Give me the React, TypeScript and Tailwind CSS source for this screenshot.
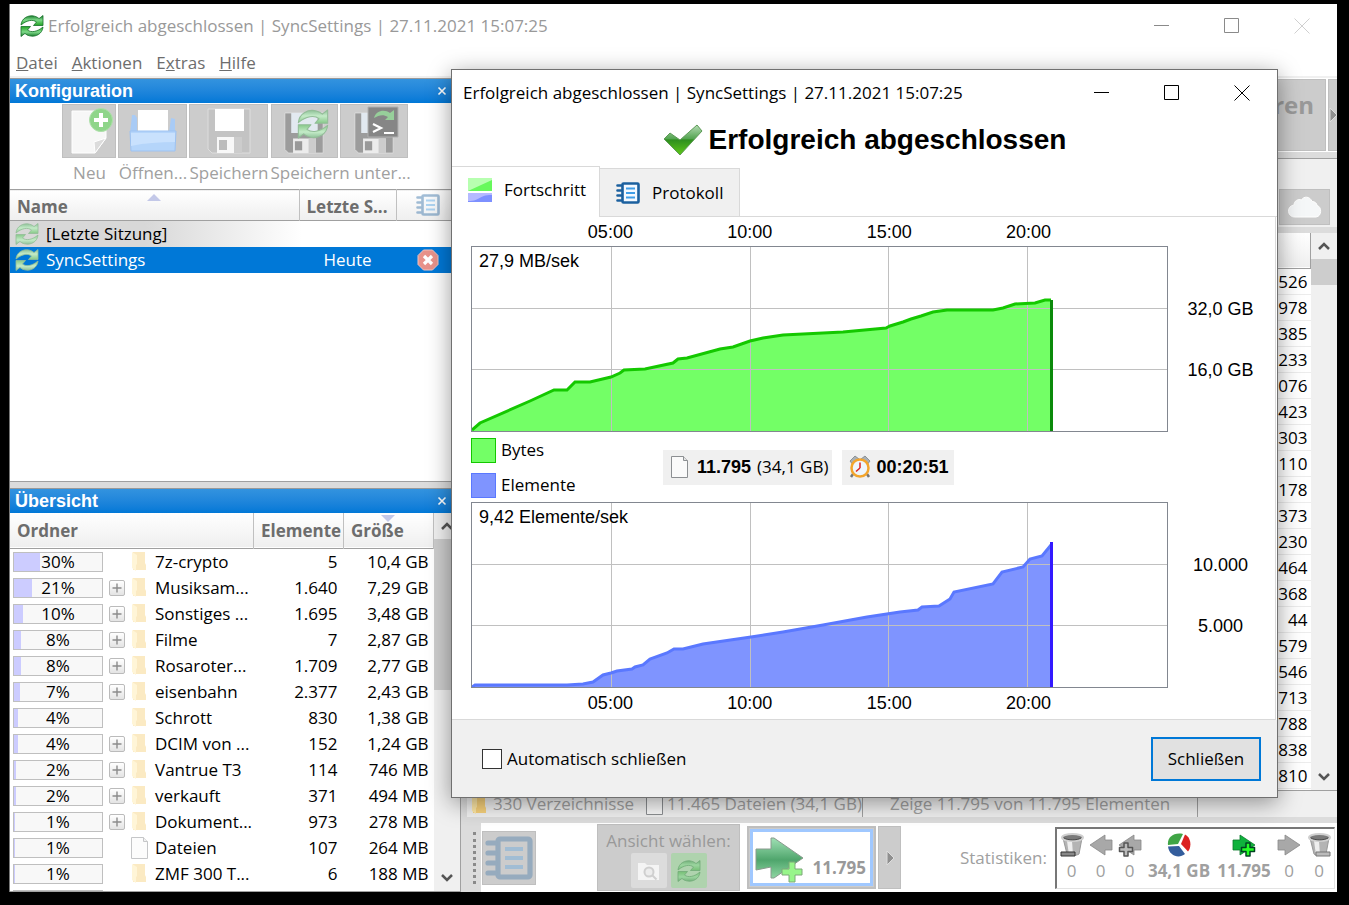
import type { ReactNode } from "react";

const folders = [
  { pct: 30, open: false, name: "7z-crypto", items: "5", size: "10,4 GB" },
  { pct: 21, open: true, name: "Musiksam...", items: "1.640", size: "7,29 GB" },
  { pct: 10, open: true, name: "Sonstiges ...", items: "1.695", size: "3,48 GB" },
  { pct: 8, open: true, name: "Filme", items: "7", size: "2,87 GB" },
  { pct: 8, open: true, name: "Rosaroter...", items: "1.709", size: "2,77 GB" },
  { pct: 7, open: true, name: "eisenbahn", items: "2.377", size: "2,43 GB" },
  { pct: 4, open: false, name: "Schrott", items: "830", size: "1,38 GB" },
  { pct: 4, open: true, name: "DCIM von ...", items: "152", size: "1,24 GB" },
  { pct: 2, open: true, name: "Vantrue T3", items: "114", size: "746 MB" },
  { pct: 2, open: true, name: "verkauft", items: "371", size: "494 MB" },
  { pct: 1, open: true, name: "Dokument...", items: "973", size: "278 MB" },
  { pct: 1, open: false, name: "Dateien", items: "107", size: "264 MB", file: true },
  { pct: 1, open: false, name: "ZMF 300 T...", items: "6", size: "188 MB" },
];

const sizes = [
  "526", "978", "385", "233", "076", "423", "303", "110", "178", "373",
  "230", "464", "368", "44", "579", "546", "713", "788", "838", "810",
];

const times = ["05:00", "10:00", "15:00", "20:00"];

const bytesLine =
  "1,184 9,177 59,155 83,144 96,144 104,136 119,136 140,131 149,127 153,124 174,123 202,117 207,113 216,112 249,103 262,101 279,95 292,92 312,89 372,86 415,82 419,80 432,76 440,73 450,70 462,66 476,64 522,64 532,62 544,58 564,57 574,54 580,54";
const itemsLine =
  "1,185 4,183 96,183 112,182 122,180 132,173 140,171 146,169 161,167 164,165 172,163 179,157 196,151 203,147 212,147 232,142 280,135 312,130 352,123 396,115 429,110 447,108 451,105 468,104 479,97 483,90 522,82 531,70 552,65 559,57 571,54 580,43";

export default function App() {
  return (
    <div className="relative h-screen min-h-[905px] min-w-[1200px] overflow-hidden bg-black pt-1 pr-3 pb-[13px] pl-[9px] font-['Open_Sans','Noto_Sans',sans-serif] text-[17px] leading-[26px] text-black">
      <div className="flex h-full flex-col border-l border-[#777] bg-white">
        <header className="flex h-[44px] shrink-0 items-center pl-2.5">
          <SyncIcon className="h-6 w-6" />
          <h1 className="ml-1 flex-1 text-[#999]">Erfolgreich abgeschlossen | SyncSettings | 27.11.2021 15:07:25</h1>
          <WindowButtons className="mr-[27px] text-[#8a8a8a]" closeClass="text-[#d0d0d0]" />
        </header>
        <nav className="flex h-[30px] shrink-0 gap-3.5 border-b-2 border-[#f0f0f0] pt-0.5 pl-1.5 text-[#6d6d6d]">
          <a href="#datei"><u>D</u>atei</a>
          <a href="#aktionen"><u>A</u>ktionen</a>
          <a href="#extras">E<u>x</u>tras</a>
          <a href="#hilfe"><u>H</u>ilfe</a>
        </nav>
        <div className="flex min-h-0 flex-1">
          <aside className="flex w-[451px] shrink-0 flex-col border-r border-[#a0a0a0]">
            <ConfigPanel />
            <div className="h-[7px] shrink-0 border-y border-t-[#a0a0a0] border-b-[#dcdcdc] bg-[#dcdcdc]" />
            <OverviewPanel />
          </aside>
          <MainPanel />
        </div>
      </div>
      <ProgressDialog />
    </div>
  );
}

function PanelTitle({ children }: { children: ReactNode }) {
  return (
    <div className="flex h-[25px] shrink-0 items-center justify-between border-t border-[#999] bg-linear-to-b from-[#3393df] to-[#0078d7] pr-[13px] pl-[5px] font-['Liberation_Sans',Arial,sans-serif] text-[18px] font-bold text-white">
      <h2>{children}</h2>
      <button aria-label="Schließen">
        <svg className="h-2.5 w-2.5" viewBox="0 0 10 10" stroke="currentColor" strokeWidth="1.6">
          <path d="M1.5 1.5l7 7M8.5 1.5l-7 7" />
        </svg>
      </button>
    </div>
  );
}

function ToolButton({ className, label, children }: { className: string; label: string; children: ReactNode }) {
  return (
    <button aria-label={label} className={`flex h-[54px] items-center justify-center border border-[#bfbfbf] bg-[#ccc] ${className}`}>
      {children}
    </button>
  );
}

function ConfigPanel() {
  return (
    <section className="flex h-[403px] shrink-0 flex-col">
      <PanelTitle>Konfiguration</PanelTitle>
      <div className="flex h-[86px] shrink-0 justify-center gap-0.5 pt-px text-[#a0a0a0]">
        <div className="text-center">
          <ToolButton label="Neu" className="w-[54px]"><NewIcon /></ToolButton>
          <div className="mt-0.5">Neu</div>
        </div>
        <div className="text-center">
          <ToolButton label="Öffnen" className="w-[69px]"><OpenIcon /></ToolButton>
          <div className="mt-0.5">Öffnen...</div>
        </div>
        <div className="text-center">
          <ToolButton label="Speichern" className="w-[79px]"><FloppyIcon light /></ToolButton>
          <div className="mt-0.5">Speichern</div>
        </div>
        <div className="w-[137px] text-center whitespace-nowrap">
          <div className="flex gap-0.5">
            <ToolButton label="Speichern unter" className="w-[67px]">
              <div className="relative">
                <FloppyIcon />
                <SyncIcon pale className="absolute top-0 left-3.5 h-8 w-8" />
              </div>
            </ToolButton>
            <ToolButton label="Als Batchauftrag speichern" className="w-[68px]">
              <div className="relative">
                <FloppyIcon />
                <BatchIcon />
              </div>
            </ToolButton>
          </div>
          <div className="mt-0.5">Speichern unter...</div>
        </div>
      </div>
      <table className="w-full table-fixed">
        <colgroup>
          <col />
          <col className="w-[97px]" />
          <col className="w-[64px]" />
        </colgroup>
        <thead>
          <tr className="h-[29px] border-y border-[#a0a0a0] bg-linear-to-b from-white to-[#efefef] text-left font-bold text-[#6d6d6d]">
            <th className="relative border-r border-[#c0c0c0] pt-1 pl-[7px]">
              Name
              <SortArrow className="absolute top-1 left-[137px]" />
            </th>
            <th className="border-r border-[#c0c0c0] pt-1 pl-[7px]">Letzte S...</th>
            <th>
              <NotebookIcon className="mx-auto h-6 w-6 opacity-40" />
            </th>
          </tr>
        </thead>
        <tbody>
          <tr className="h-[26px] bg-linear-to-r from-[#d8d8d8] from-30% to-white to-65%">
            <td>
              <div className="flex items-center gap-[7px] pl-[5px]">
                <SyncIcon pale className="h-6 w-6" />
                [Letzte Sitzung]
              </div>
            </td>
            <td />
            <td />
          </tr>
          <tr className="h-[26px] bg-[#0078d7] text-white">
            <td>
              <div className="flex items-center gap-[7px] pl-[5px]">
                <SyncIcon pale className="h-6 w-6" />
                SyncSettings
              </div>
            </td>
            <td className="text-center">Heute</td>
            <td>
              <svg className="mx-auto h-[22px] w-[22px]" viewBox="0 0 22 22">
                <path d="M6.5 1h9L21 6.500v9L15.500 21h-9L1 15.500v-9z" fill="#e8928a" stroke="#f0c4c0" />
                <path d="M7 7l8 8M15 7l-8 8" stroke="#fff" strokeWidth="3.200" />
              </svg>
            </td>
          </tr>
        </tbody>
      </table>
    </section>
  );
}

function OverviewPanel() {
  return (
    <section className="flex min-h-0 flex-1 flex-col">
      <PanelTitle>Übersicht</PanelTitle>
      <div className="flex min-h-0 flex-1 border-b border-[#a0a0a0]">
        <div className="min-w-0 flex-1 overflow-hidden">
          <table className="w-full table-fixed">
            <colgroup>
              <col />
              <col className="w-[90px]" />
              <col className="w-[90px]" />
            </colgroup>
            <thead>
              <tr className="h-[35px] border-b border-[#a0a0a0] bg-linear-to-b from-white to-[#efefef] text-left font-bold text-[#6d6d6d]">
                <th className="border-r border-[#c0c0c0] pt-0.5 pl-[7px]">Ordner</th>
                <th className="border-r border-[#c0c0c0] pt-0.5 pl-[7px]">Elemente</th>
                <th className="relative border-r border-[#c0c0c0] pt-0.5 pl-[7px]">
                  Größe
                  <SortArrow className="absolute top-0.5 left-[37px] rotate-180" />
                </th>
              </tr>
            </thead>
            <tbody>
              {folders.map((f) => (
                <tr key={f.name} className="h-[26px]">
                  <td>
                    <div className="flex items-center pl-[3px]">
                      <Percent value={f.pct} label={`${f.pct}%`} />
                      <div className="ml-1.5 w-4">
                        {f.open && (
                          <button aria-label="Aufklappen" className="block h-4 w-4 rounded-xs border border-[#bbb] bg-linear-to-b from-white to-[#e4e4e4]">
                            <svg viewBox="0 0 14 14" stroke="#8c8c8c" strokeWidth="1.400">
                              <path d="M7 2.500v9M2.500 7h9" />
                            </svg>
                          </button>
                        )}
                      </div>
                      <div className="ml-1.5 w-6">{f.file ? <FileIcon className="h-[22px] w-[17px] opacity-50" /> : <FolderIcon className="h-[21px] w-4 opacity-45" />}</div>
                      <span className="whitespace-nowrap">{f.name}</span>
                    </div>
                  </td>
                  <td className="pr-1.5 text-right">{f.items}</td>
                  <td className="pr-[5px] text-right whitespace-nowrap">{f.size}</td>
                </tr>
              ))}
              <tr className="h-[26px]">
                <td className="pl-[3px]">
                  <Percent value={1} label="" />
                </td>
                <td />
                <td />
              </tr>
            </tbody>
          </table>
        </div>
        <ScrollBar thumb="h-[151px]" />
      </div>
    </section>
  );
}

function Percent({ value, label }: { value: number; label: string }) {
  return (
    <div className="relative h-5 w-[90px] border border-[#bfbfbf] bg-[#f8f8f8]">
      <div className="h-full bg-[#ccccff]" style={{ width: `${value}%` }} />
      <span className="absolute inset-0 text-center leading-[18px]">{label}</span>
    </div>
  );
}

function ScrollBar({ thumb }: { thumb: string }) {
  return (
    <div className="flex w-[26px] shrink-0 flex-col items-center bg-[#f0f0f0] text-[#555]">
      <svg className="my-2 h-2.5 w-3 shrink-0" viewBox="0 0 12 10" fill="none" stroke="currentColor" strokeWidth="2.500">
        <path d="M1 8l5-5 5 5" />
      </svg>
      <div className={`w-full bg-[#cdcdcd] ${thumb}`} />
      <svg className="mt-auto mb-2 h-2.5 w-3 shrink-0" viewBox="0 0 12 10" fill="none" stroke="currentColor" strokeWidth="2.500">
        <path d="M1 2l5 5 5-5" />
      </svg>
    </div>
  );
}

function MainPanel() {
  return (
    <main className="flex min-w-0 flex-1 flex-col border-l-[6px] border-[#dcdcdc] bg-[#f0f0f0]">
      <div className="flex h-[74px] shrink-0 justify-end gap-0.5 bg-white pt-px">
        <button className="h-[72px] w-[220px] border border-[#bfbfbf] bg-[#ccc] pr-[11px] pb-5 text-right text-[24px] font-bold text-[#999]">Synchronisieren</button>
        <button aria-label="Mehr" className="flex h-[72px] w-[9px] items-center border border-r-0 border-[#bfbfbf] bg-[#ccc]">
          <Triangle />
        </button>
      </div>
      <div className="h-[7px] shrink-0 border-b border-[#a0a0a0] bg-[#dcdcdc]" />
      <div className="flex h-[68px] shrink-0 items-end justify-end pr-[7px] pb-0.5">
        <button aria-label="Cloud" className="flex h-[36px] w-[51px] items-center justify-center border border-[#bfbfbf] bg-[#ccc]">
          <svg className="h-[22px] w-[34px]" viewBox="0 0 34 22">
            <path d="M7 21a6 6 0 0 1-1-12c0-4 4-6.500 7.500-5C15.500 0 22 0 24 5.500c3 0 5 2 5 4 5 1 5 11-1 11.500z" fill="#f5f7f8" stroke="#fff" />
          </svg>
        </button>
      </div>
      <div className="h-1.5 shrink-0 bg-[#dcdcdc]" />
      <div className="flex min-h-0 flex-1 border-b border-[#a0a0a0] bg-white">
        <div className="min-w-0 flex-1 overflow-hidden">
          <table className="w-full">
            <thead>
              <tr className="h-[35px] border-b border-[#a0a0a0] bg-linear-to-b from-white to-[#efefef]">
                <th className="border-r border-[#a0a0a0]" />
              </tr>
            </thead>
            <tbody>
              {sizes.map((s) => (
                <tr key={s} className="h-[25px] border-b border-[#ececec] leading-[25px]">
                  <td className="pr-[3px] text-right">{s}</td>
                </tr>
              ))}
            </tbody>
          </table>
        </div>
        <ScrollBar thumb="h-[26px]" />
      </div>
      <div className="flex h-[26px] shrink-0 items-center text-[#a0a0a0]">
        <FolderIcon className="ml-1 h-[21px] w-4" />
        <span className="ml-1.5 whitespace-nowrap">330 Verzeichnisse</span>
        <FileIcon className="mr-1 ml-3 h-[22px] w-[17px]" />
        <span className="border-r border-[#a0a0a0] whitespace-nowrap">11.465 Dateien (34,1 GB)</span>
        <span className="border-r border-[#a0a0a0] px-[27px] whitespace-nowrap">Zeige 11.795 von 11.795 Elementen</span>
      </div>
      <div className="h-1.5 shrink-0 bg-[#dcdcdc]" />
      <footer className="flex h-[69px] shrink-0 items-center bg-white text-[#999]">
        <div className="flex h-full w-3.5 items-center justify-center bg-[#dcdcdc]">
          <div className="h-[52px] border-l-[3px] border-dotted border-[#8a8a8a]" />
        </div>
        <ToolButton label="Protokoll" className="ml-px w-[54px]">
          <NotebookIcon inner="none" className="h-[48px] w-[48px] opacity-30" />
        </ToolButton>
        <div className="ml-[61px] flex h-[67px] w-[143px] flex-col items-center border border-[#bfbfbf] bg-[#ccc] pt-1">
          <span className="leading-6">Ansicht wählen:</span>
          <div className="flex gap-1">
            <button aria-label="Aktion" className="flex h-[35px] w-[36px] items-center justify-center rounded-xs bg-[#dcdcdc]">
              <svg className="h-6 w-6" viewBox="0 0 24 24">
                <path d="M1 4h7l2 2h12v15H1z" fill="#f4f4f4" />
                <circle cx="12" cy="13" r="4.500" fill="#ececec" stroke="#cfcfcf" strokeWidth="2" />
                <path d="M15.500 16.500l4 4" stroke="#cfcfcf" strokeWidth="2" />
              </svg>
            </button>
            <button aria-label="Kategorie" className="flex h-[35px] w-[36px] items-center justify-center rounded-xs bg-[#afd3ae]">
              <SyncIcon className="h-6 w-6 opacity-40" />
            </button>
          </div>
        </div>
        <button className="ml-[7px] h-[63px] w-[129px] border-2 border-[#bfbfbf] bg-[#ccc] p-px">
          <div className="flex h-full items-end border-[3px] border-[#a0c8ff] bg-white">
            <svg className="ml-0.5 h-[48px] w-[50px]" viewBox="0 0 50 48">
              <defs>
                <linearGradient id="go" x1="0" y1="0" x2="0" y2="1">
                  <stop offset="0" stopColor="#9fe0b4" />
                  <stop offset="0.550" stopColor="#4fa56c" />
                  <stop offset="1" stopColor="#8ed6a2" />
                </linearGradient>
              </defs>
              <path d="M1 14h15V3h3l29 20-29 20h-3V32l-15 3z" fill="url(#go)" stroke="#8a9a8e" />
              <path d="M34 27h6v7h7v6h-7v7h-6v-7h-7v-6h7z" fill="#97f58a" stroke="#7da879" />
            </svg>
            <span className="ml-auto pr-1 pb-0.5 font-bold">11.795</span>
          </div>
        </button>
        <button aria-label="Optionen" className="ml-0.5 flex h-[63px] w-[23px] items-center justify-center border border-[#bfbfbf] bg-[#ccc]">
          <Triangle />
        </button>
        <span className="ml-auto pr-2 text-[#a0a0a0]">Statistiken:</span>
        <div className="mr-0.5 flex h-[62px] shrink-0 border-t-2 border-r border-b border-l-2 border-t-[#777] border-r-[#e3e3e3] border-b-[#e3e3e3] border-l-[#777] pt-1 text-center text-[#a0a0a0]">
          <Stat className="w-[29px]" value="0"><BinIcon /></Stat>
          <Stat className="w-[29px]" value="0"><ArrowIcon left /></Stat>
          <Stat className="w-[29px]" value="0"><ArrowIcon left plus /></Stat>
          <Stat className="w-[70px] font-bold" value="34,1 GB">
            <svg className="h-6 w-6" viewBox="0 0 24 24">
              <path d="M11 11L1 12C0 5 6-1 16 1z" fill="#3fa545" />
              <path d="M14 11l4-9.500c6 3 7 12 3 17z" fill="#dc2020" />
              <path d="M12 13l6 8C12 26 2 23 1 13.500z" fill="#345d9c" />
            </svg>
          </Stat>
          <Stat className="w-[60px] font-bold" value="11.795"><ArrowIcon green plus /></Stat>
          <Stat className="w-[30px]" value="0"><ArrowIcon /></Stat>
          <Stat className="w-[30px]" value="0"><BinIcon right /></Stat>
        </div>
      </footer>
    </main>
  );
}

function Stat({ className, value, children }: { className: string; value: string; children: ReactNode }) {
  return (
    <div className={`flex flex-col items-center gap-px whitespace-nowrap ${className}`}>
      {children}
      <span>{value}</span>
    </div>
  );
}

function ProgressDialog() {
  return (
    <div role="dialog" aria-label="Fortschritt" className="absolute top-[69px] right-[71px] left-[451px] border border-[#707070] bg-white shadow-[0_5px_22px_rgba(0,0,0,0.400)]">
      <div className="flex h-[45px] items-center pl-[11px]">
        <h2 className="flex-1">Erfolgreich abgeschlossen | SyncSettings | 27.11.2021 15:07:25</h2>
        <WindowButtons className="mr-[27px] text-black" />
      </div>
      <div className="flex h-[51px] items-center justify-center gap-1.5 pb-0.5 font-['Liberation_Sans',Arial,sans-serif] text-[28px] font-bold">
        <svg className="h-8 w-10" viewBox="0 0 40 32">
          <defs>
            <linearGradient id="ok" x1="0" y1="0" x2="0" y2="1">
              <stop offset="0" stopColor="#b5dcb5" />
              <stop offset="0.450" stopColor="#55a552" />
              <stop offset="0.500" stopColor="#2f8f1f" />
              <stop offset="1" stopColor="#5fc818" />
            </linearGradient>
          </defs>
          <path d="M1 15l6-6 10 7L34 1l5 6-22 24z" fill="url(#ok)" stroke="#5d9a56" strokeLinejoin="round" />
        </svg>
        Erfolgreich abgeschlossen
      </div>
      <div role="tablist" className="flex items-end">
        <button role="tab" aria-selected="true" className="flex h-[51px] w-[148px] items-center gap-3 border-t border-r border-[#d9d9d9] pb-1 pl-4">
          <svg className="h-6 w-6" viewBox="0 0 24 24">
            <path d="M0 0h24v13H0z" fill="#b7ffb0" />
            <path d="M0 13L24 2v11z" fill="#67f95c" />
            <path d="M0 15h24v9H0z" fill="#b5baff" />
            <path d="M0 23c14 0 9-6 24-6v7H0z" fill="#7d90ff" />
          </svg>
          Fortschritt
        </button>
        <button role="tab" aria-selected="false" className="flex h-[49px] w-[140px] items-center gap-3 border border-l-0 border-[#d9d9d9] bg-[#f0f0f0] pl-4">
          <NotebookIcon className="h-6 w-6" />
          Protokoll
        </button>
        <div className="flex-1 border-b border-[#d9d9d9]" />
      </div>
      <div className="mr-px border-r border-b border-[#d9d9d9] pl-[19px] font-['Liberation_Sans',Arial,sans-serif] text-[18px]">
        <div className="mr-[107px] flex h-[29px] items-center">
          <TimeLabels />
        </div>
        <Chart speed="27,9 MB/sek" labels={["32,0 GB", "16,0 GB"]} line={bytesLine} fill="#73ff66" stroke="#14c800" end="#0b8a0b" top={54} />
        <div className="flex h-[70px] font-['Open_Sans','Noto_Sans',sans-serif] text-[17px]">
          <div className="w-[192px] space-y-[9px] pt-[5px]">
            <div className="flex items-center gap-[5px]">
              <span className="h-[25px] w-[25px] border border-[#14c800] bg-[#73ff66]" />
              Bytes
            </div>
            <div className="flex items-center gap-[5px]">
              <span className="h-[25px] w-[25px] border border-[#5a78ff] bg-[#7f94ff]" />
              Elemente
            </div>
          </div>
          <div className="flex items-center gap-2.5 whitespace-nowrap">
            <div className="flex h-[35px] items-center bg-[#f0f0f0] pr-1 pl-2">
              <FileIcon className="h-[22px] w-[17px]" />
              <b className="mr-1.5 ml-[9px] font-['Liberation_Sans',Arial,sans-serif] text-[18px]">11.795</b>
              (34,1 GB)
            </div>
            <div className="flex h-[35px] items-center gap-1 bg-[#f0f0f0] px-1.5">
              <ClockIcon />
              <b className="font-['Liberation_Sans',Arial,sans-serif] text-[18px]">00:20:51</b>
            </div>
          </div>
        </div>
        <Chart speed="9,42 Elemente/sek" labels={["10.000", "5.000"]} line={itemsLine} fill="#7f94ff" stroke="#5a78ff" end="#3319ff" top={40} />
        <div className="mr-[107px] flex h-[31px] items-center pb-0.5">
          <TimeLabels />
        </div>
      </div>
      <div className="flex h-[77px] items-center justify-between bg-[#f0f0f0] pr-4 pl-[30px]">
        <label className="flex items-center gap-[5px]">
          <input type="checkbox" className="h-5 w-5 appearance-none border border-[#333] bg-white" />
          Automatisch schließen
        </label>
        <button className="h-[44px] w-[110px] border-2 border-[#0078d7] bg-[#e1e1e1]">Schließen</button>
      </div>
    </div>
  );
}

function TimeLabels() {
  return (
    <>
      <span className="w-[10%]" />
      {times.map((t) => (
        <span key={t} className="w-1/5 text-center">{t}</span>
      ))}
    </>
  );
}

function Chart({ speed, labels, line, fill, stroke, end, top }: {
  speed: string;
  labels: string[];
  line: string;
  fill: string;
  stroke: string;
  end: string;
  top: number;
}) {
  return (
    <div className="flex h-[186px]">
      <div className="relative flex-1 border border-[#828790]">
        <svg className="block h-full w-full" viewBox="1 1 695 184" preserveAspectRatio="none" fill="none">
          <polygon points={`1,186 ${line} 580,186`} fill={fill} />
          <path d="M140.500 0v186M279.500 0v186M417.500 0v186M556.500 0v186M0 62.500h697M0 123.500h697" stroke="#c0c0c0" />
          <polyline points={line} stroke={stroke} strokeWidth="3" />
          <path d={`M580.500 ${top}V186`} stroke={end} strokeWidth="3" />
        </svg>
        <span className="absolute top-px left-[7px]">{speed}</span>
      </div>
      <div className="flex w-[107px] flex-col items-center gap-[35px] pt-[50px] pr-0.5">
        {labels.map((l) => (
          <span key={l}>{l}</span>
        ))}
      </div>
    </div>
  );
}

function WindowButtons({ className, closeClass = "" }: { className: string; closeClass?: string }) {
  return (
    <div className={`flex items-center gap-[54px] ${className}`}>
      <button aria-label="Minimieren">
        <svg className="h-4 w-4" viewBox="0 0 16 16" stroke="currentColor"><path d="M0 7.500h15" /></svg>
      </button>
      <button aria-label="Maximieren">
        <svg className="h-4 w-4" viewBox="0 0 16 16" fill="none" stroke="currentColor"><path d="M.5.5h14v14H.5z" /></svg>
      </button>
      <button aria-label="Schließen" className={closeClass}>
        <svg className="h-4 w-4" viewBox="0 0 16 16" stroke="currentColor"><path d="M.5.500l15 15M15.500.5l-15 15" /></svg>
      </button>
    </div>
  );
}

function Triangle() {
  return (
    <svg className="h-4 w-2 shrink-0" viewBox="0 0 8 16">
      <path d="M1 1l7 7-7 7z" fill="#8f8f8f" stroke="#ddd" />
    </svg>
  );
}

function SortArrow({ className }: { className: string }) {
  return (
    <svg className={`h-[7px] w-3.5 ${className}`} viewBox="0 0 14 7">
      <path d="M7 0l7 7H0z" fill="#c3c8e8" />
    </svg>
  );
}

function SyncIcon({ className, pale = false }: { className: string; pale?: boolean }) {
  const arrow = "M1 11C1.500 4.500 8 .5 14.500 2.200c2 .5 3.500 1.400 4.500 2.400l4-3.100v10h-9.500L16.500 8C13 5.200 7 6 1 11z";
  const fill = pale ? "url(#sync-pale)" : "url(#sync)";
  const stroke = pale ? "#93bd98" : "#17702a";
  return (
    <svg className={`shrink-0 ${className}`} viewBox="0 0 24 24" strokeLinejoin="round">
      <defs>
        <linearGradient id="sync" x1="0" y1="0" x2="0" y2="1">
          <stop offset="0" stopColor="#167a2a" />
          <stop offset="0.450" stopColor="#7fd98a" />
          <stop offset="1" stopColor="#22a322" />
        </linearGradient>
        <linearGradient id="sync-pale" x1="0" y1="0" x2="0" y2="1">
          <stop offset="0" stopColor="#8dc097" />
          <stop offset="0.450" stopColor="#c4ebc8" />
          <stop offset="1" stopColor="#86c888" />
        </linearGradient>
      </defs>
      <path d={arrow} fill={fill} stroke={stroke} strokeWidth="0.800" />
      <path d={arrow} transform="rotate(180 12 12)" fill={fill} stroke={stroke} strokeWidth="0.800" />
    </svg>
  );
}

function NotebookIcon({ className, inner = "#f4f9ff" }: { className: string; inner?: string }) {
  return (
    <svg className={className} viewBox="0 0 24 24" fill="none">
      <rect x="6.500" y="2.500" width="16" height="19" rx="1" fill={inner} stroke="#1b609f" strokeWidth="2.600" />
      <path d="M10 7.500h9M10 12h9M10 16.500h9" stroke="#3f9ee8" strokeWidth="2" />
      <path d="M1.500 4.500h3.500M1.500 9.500h3.500M1.500 14.500h3.500M1.500 19.500h3.500" stroke="#1b609f" strokeWidth="2.600" strokeLinecap="round" />
    </svg>
  );
}

function FileIcon({ className }: { className: string }) {
  return (
    <svg className={`shrink-0 ${className}`} viewBox="0 0 17 22">
      <path d="M.5.500h12l4 4v17H.5z" fill="#fafafa" stroke="#8c8f92" />
      <path d="M12.500.5v4h4" fill="#e4e4e4" stroke="#8c8f92" />
    </svg>
  );
}

function FolderIcon({ className }: { className: string }) {
  return (
    <svg className={`shrink-0 ${className}`} viewBox="0 0 16 21">
      <path d="M2 1h12v11l1 2v5H2z" fill="#f8d27c" />
      <path d="M1 1l5 3v9l-1 1v6l-4-3z" fill="#ffe9a8" />
    </svg>
  );
}

function NewIcon() {
  return (
    <svg className="h-[50px] w-[48px]" viewBox="0 0 48 50">
      <path d="M7 5h34v27L30 47H7z" fill="#f7f7f7" stroke="#fff" />
      <path d="M41 32L30 47l-1-11z" fill="#dcdcdc" stroke="#fff" />
      <circle cx="36" cy="14" r="11.500" fill="#8fd58a" stroke="#aee0aa" />
      <path d="M36 7v14M29 14h14" stroke="#fff" strokeWidth="4" />
    </svg>
  );
}

function OpenIcon() {
  return (
    <svg className="h-[46px] w-[48px]" viewBox="0 0 48 46">
      <path d="M3 7h3l2 3v15H1zM42 10l4 1v14h-6z" fill="#a9cbf5" />
      <path d="M9 2h30v22H9z" fill="#fff" />
      <path d="M1 23h46l-1 20H2z" fill="#b5d5fa" stroke="#9dc2f1" />
      <path d="M2 25h44v9c-16 0-30 1-44 4z" fill="#c9e1fd" />
    </svg>
  );
}

function FloppyIcon({ light = false }: { light?: boolean }) {
  return (
    <svg className={light ? "h-[46px] w-[46px]" : "mt-1 h-[42px] w-[42px]"} viewBox="0 0 46 46">
      <path d="M2 1h42v44H6l-4-4z" fill={light ? "#c3c3c3" : "#9c9c9c"} stroke="#ddd" />
      <path d="M9 1h29v22H9z" fill={light ? "#fff" : "#e2e9f0"} />
      <path d="M11 29h25v16H11z" fill={light ? "#f8f8f8" : "#ececec"} />
      <path d="M13 32h8v10h-8z" fill={light ? "#bcbcbc" : "#999"} />
      <path d="M28 29h8v16h-8z" fill="#ccc" />
    </svg>
  );
}

function BatchIcon() {
  return (
    <svg className="absolute -top-0.5 left-[14px] h-8 w-8" viewBox="0 0 32 32">
      <path d="M1 1h30v30H1z" fill="#868686" stroke="#b0b0b0" />
      <path d="M7 12c2-8 11-9 16-5l4-3v10h-9l3-3c-5-3-9-2-14 1z" fill="#97cf9a" />
      <path d="M6 18l8 4-8 4M17 27h10" fill="none" stroke="#fff" strokeWidth="2.200" />
    </svg>
  );
}

function ClockIcon() {
  return (
    <svg className="h-6 w-6" viewBox="0 0 24 24">
      <path d="M2 6l5-5 4 3-6 6zM22 6l-5-5-4 3 6 6z" fill="#a9b0b5" stroke="#70777c" strokeWidth="0.700" />
      <path d="M5 19l-2 3M19 19l2 3" stroke="#777" strokeWidth="2.500" />
      <circle cx="12" cy="13" r="8.500" fill="#eef6fd" stroke="#f3a52d" strokeWidth="2.500" />
      <path d="M12 13V7.500M12 13l-4 3.500" stroke="#d22" strokeWidth="1.500" />
    </svg>
  );
}

function BinIcon({ right = false }: { right?: boolean }) {
  return (
    <svg className="h-6 w-6" viewBox="0 0 24 24">
      <path d="M3 5h19l-3 16c-3 2-10 2-12 0z" fill="#b4b4b4" stroke="#999" />
      <path d="M7 8h5l1 14H9z" fill="#eee" />
      <ellipse cx="12.500" cy="4.500" rx="10.500" ry="3.500" fill="#7a7a7a" stroke="#d0d0d0" strokeWidth="2" />
      <path d="M4 5c4 2.500 13 2.500 17 0" fill="none" stroke="#4a4a4a" />
      {right ? <path d="M9 19h14v4H9z" fill="#bbb" stroke="#777" /> : <path d="M1 19h14v4H1z" fill="#888" stroke="#333" />}
    </svg>
  );
}

function ArrowIcon({ left = false, plus = false, green = false }: { left?: boolean; plus?: boolean; green?: boolean }) {
  return (
    <svg className="h-6 w-6" viewBox="0 0 24 24" strokeLinejoin="round">
      <path d="M1 7h7V2l15 10L8 22v-5H1z" transform={left ? "rotate(180 12 12)" : undefined} fill={green ? "#0fb23c" : "#a8a8a8"} stroke={green ? "#087a28" : "#888"} strokeWidth="0.800" />
      {plus && (
        <path
          d="M11 9h4v4.500h4.500v4H15V22h-4v-4.500H6.500v-4H11z"
          transform={left ? "translate(-5 1)" : "translate(3 1)"}
          fill={green ? "#24ff24" : "#bbb"}
          stroke={green ? "#042" : "#555"}
          strokeWidth="1.500"
        />
      )}
    </svg>
  );
}
